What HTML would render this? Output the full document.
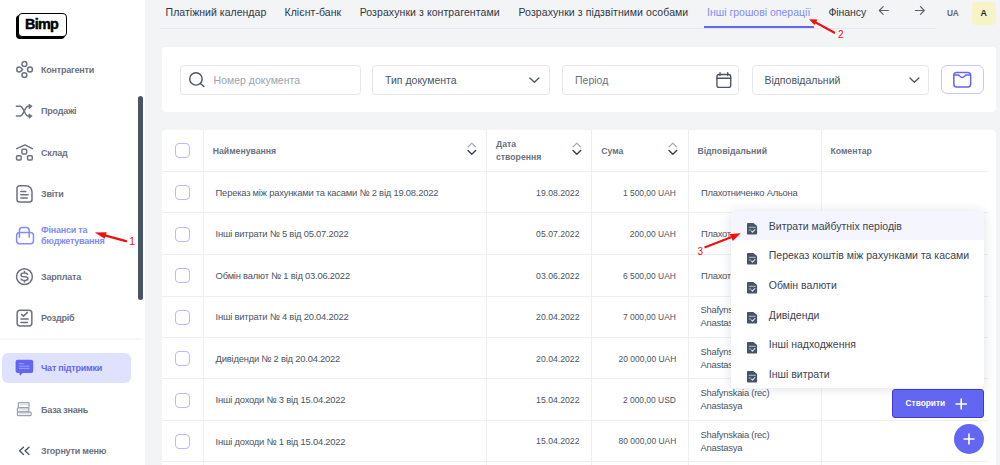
<!DOCTYPE html><html><head><meta charset="utf-8"><style>
html,body{margin:0;padding:0;width:1000px;height:465px;overflow:hidden;background:#f3f4f6;font-family:"Liberation Sans",sans-serif;}
.t{position:absolute;white-space:nowrap;line-height:1;}
svg{overflow:visible}
</style></head><body>
<div style="position:absolute;left:0px;top:0px;width:144.5px;height:465px;background:#fff;"></div>
<div style="position:absolute;left:16.3px;top:15.2px;width:48.5px;height:23.4px;background:#000;border-radius:4px;"></div>
<div style="position:absolute;left:17.6px;top:12.6px;width:49px;height:24px;box-sizing:border-box;border:1.6px solid #000;border-radius:4px;background:#fff;"></div>
<div class="t" style="left:25px;top:16.81px;font-size:14.4px;color:#000;font-weight:700;letter-spacing:-0.7px;-webkit-text-stroke:0.45px #000;">Bimp</div>
<svg style="position:absolute;left:15px;top:60px;" width="20" height="20" viewBox="0 0 20 20"><g fill="none" stroke="#6b7280" stroke-width="1.5"><circle cx="9.4" cy="4" r="2.45"/><path d="M7.6 9.5C6.5 8 5.5 7.05 4.2 7.05A2.45 2.45 0 0 0 4.2 11.95C5.5 11.95 6.5 11 7.6 9.5z"/><circle cx="15" cy="9.5" r="2.45"/><circle cx="9.4" cy="15.1" r="2.45"/></g></svg>
<div class="t" style="left:41px;top:65.88px;font-size:9px;color:#6b7280;font-weight:700;letter-spacing:-0.22px;">Контрагенти</div>
<svg style="position:absolute;left:15px;top:102px;" width="20" height="18" viewBox="0 0 20 18"><g fill="none" stroke="#6b7280" stroke-width="1.5" stroke-linecap="round"><path d="M1.4 4.3H5C8.8 4.3 9.6 14.1 13.2 14.1H14.6"/><path d="M1.4 14.1H5C8.8 14.1 9.6 4.3 13.2 4.3H14.6"/></g><path d="M14 2.1L17.2 4.3 14 6.5z M14 11.9L17.2 14.1 14 16.3z" fill="#6b7280" stroke="#6b7280" stroke-width="0.8" stroke-linejoin="round"/></svg>
<div class="t" style="left:41px;top:107.08px;font-size:9px;color:#6b7280;font-weight:700;letter-spacing:-0.22px;">Продажі</div>
<svg style="position:absolute;left:15px;top:142px;" width="20" height="20" viewBox="0 0 20 20"><g fill="none" stroke="#6b7280" stroke-width="1.5" stroke-linejoin="round" stroke-linecap="round"><path d="M1.7 6.6L10 2.9 17.3 6.6"/><rect x="6.95" y="7.25" width="4.7" height="4.7" rx="1"/><rect x="1.55" y="13.65" width="4.6" height="4.45" rx="1"/><rect x="12.55" y="13.65" width="4.7" height="4.45" rx="1"/></g></svg>
<div class="t" style="left:41px;top:148.88px;font-size:9px;color:#6b7280;font-weight:700;letter-spacing:-0.22px;">Склад</div>
<svg style="position:absolute;left:15px;top:184px;" width="20" height="20" viewBox="0 0 20 20"><g fill="none" stroke="#6b7280" stroke-width="1.5" stroke-linejoin="round" stroke-linecap="round"><path d="M2 4.2a2.5 2.5 0 0 1 2.5-2.5H11a6 6 0 0 1 6 6V15.4a2.5 2.5 0 0 1-2.5 2.5H4.5a2.5 2.5 0 0 1-2.5-2.5z"/><path d="M5.8 7.6H10.8M5.8 10.8H13M5.8 13.9H12.3"/></g></svg>
<div class="t" style="left:41px;top:189.78px;font-size:9px;color:#6b7280;font-weight:700;letter-spacing:-0.22px;">Звіти</div>
<svg style="position:absolute;left:15px;top:225px;" width="20" height="20" viewBox="0 0 20 20"><g fill="none" stroke="#818cf8" stroke-width="1.5" stroke-linejoin="round" stroke-linecap="round"><rect x="1.65" y="7.55" width="16.8" height="11.3" rx="3"/><path d="M4.45 12.3V5.4a3 3 0 0 1 3-3H11.15a3 3 0 0 1 3 3V12.3"/></g></svg>
<div class="t" style="left:41px;top:225.78px;font-size:9px;color:#818cf8;font-weight:700;letter-spacing:-0.22px;">Фінанси та</div>
<div class="t" style="left:41px;top:237.18px;font-size:9px;color:#818cf8;font-weight:700;letter-spacing:-0.22px;">бюджетування</div>
<svg style="position:absolute;left:15px;top:267px;" width="20" height="20" viewBox="0 0 20 20"><g fill="none" stroke="#6b7280" stroke-width="1.5" stroke-linecap="round"><circle cx="9.45" cy="9.7" r="7.9"/><path d="M12.6 7.3C12.3 6.5 11.3 6 10 6H8.7C7.1 6 6 6.8 6 8S7.1 9.7 8.7 9.7H10.3C11.9 9.7 12.9 10.3 12.9 11.5S11.8 13.4 10.2 13.4H8.6C7.3 13.4 6.3 12.9 6 12.1M9.45 4.4V6M9.45 13.4V15"/></g></svg>
<div class="t" style="left:41px;top:272.58px;font-size:9px;color:#6b7280;font-weight:700;letter-spacing:-0.22px;">Зарплата</div>
<svg style="position:absolute;left:15px;top:308px;" width="20" height="21" viewBox="0 0 20 21"><g fill="none" stroke="#6b7280" stroke-width="1.5" stroke-linecap="round" stroke-linejoin="round"><rect x="2.15" y="2.35" width="14.7" height="15.7" rx="3"/><path d="M6.6 6.4L8.5 8.1 12.4 4.4M5.9 11H13.2M5.9 14.4H12.4"/></g></svg>
<div class="t" style="left:41px;top:314.08px;font-size:9px;color:#6b7280;font-weight:700;letter-spacing:-0.22px;">Роздріб</div>
<div style="position:absolute;left:0px;top:336.5px;width:141px;height:3.5px;background:linear-gradient(#ffffff,#f3f4f6);"></div>
<div style="position:absolute;left:2px;top:353px;width:129px;height:30px;background:#e0e1fc;border-radius:6px;"></div>
<svg style="position:absolute;left:15px;top:359px;" width="20" height="19" viewBox="0 0 20 19"><rect x="0.6" y="0.7" width="17.6" height="13.2" rx="2" fill="#6366f1"/><path d="M4.1 13.5L5.1 16.7 8 13.5z" fill="#6366f1"/><path d="M4 4.7H8.8M4 7.2H14.4M4 9.4H14.4" stroke="#a4a8f8" stroke-width="0.9"/></svg>
<div class="t" style="left:41px;top:363.98px;font-size:9px;color:#6366f1;font-weight:700;letter-spacing:-0.22px;">Чат підтримки</div>
<svg style="position:absolute;left:15px;top:401px;" width="20" height="18" viewBox="0 0 20 18"><g fill="#fff" stroke="#9ca3af" stroke-width="1.3" stroke-linejoin="round"><rect x="3.4" y="1.6" width="10.6" height="5" rx="0.8"/><rect x="2.4" y="6.9" width="11.4" height="4" rx="0.8"/><rect x="2.4" y="11.1" width="13.7" height="3.5" rx="0.8"/></g><path d="M5 3.6h8M4 8.9h9M4 12.9h11" stroke="#d1d5db" stroke-width="1"/></svg>
<div class="t" style="left:41px;top:405.58px;font-size:9px;color:#6b7280;font-weight:700;letter-spacing:-0.22px;">База знань</div>
<svg style="position:absolute;left:18px;top:446px;" width="14" height="11" viewBox="0 0 14 11"><g fill="none" stroke="#4b5563" stroke-width="1.4" stroke-linecap="round" stroke-linejoin="round"><path d="M5.5 1.2L1.6 4.8 5.5 8.4M11 1.2L7.1 4.8 11 8.4"/></g></svg>
<div class="t" style="left:41px;top:446.88px;font-size:9px;color:#6b7280;font-weight:700;letter-spacing:-0.22px;">Згорнути меню</div>
<div style="position:absolute;left:138px;top:96px;width:5px;height:204px;background:#475569;border-radius:3px;"></div>
<svg style="position:absolute;left:90px;top:225px;" width="50" height="25" viewBox="0 0 50 25"><path d="M36 16.2L12 9.6" stroke="#f01010" stroke-width="2.3" stroke-linecap="round"/><path d="M5.6 7.7L16.3 7.6 14.5 13.4z" fill="#f01010" stroke="#f01010" stroke-width="0.5" stroke-linejoin="round"/></svg>
<div class="t" style="left:129.3px;top:235.71px;font-size:10.5px;color:#f01010;font-weight:400;font-family:"Liberation Serif",serif;">1</div>
<div class="t" style="left:165.6px;top:6.51px;font-size:10.5px;color:#303744;font-weight:400;letter-spacing:0.03px;">Платіжний календар</div>
<div class="t" style="left:284.5px;top:6.51px;font-size:10.5px;color:#303744;font-weight:400;letter-spacing:0.06px;">Клієнт-банк</div>
<div class="t" style="left:359.7px;top:6.51px;font-size:10.5px;color:#303744;font-weight:400;letter-spacing:0.08px;">Розрахунки з контрагентами</div>
<div class="t" style="left:518.5px;top:6.51px;font-size:10.5px;color:#303744;font-weight:400;letter-spacing:0.08px;">Розрахунки з підзвітними особами</div>
<div class="t" style="left:707px;top:6.51px;font-size:10.5px;color:#818cf8;font-weight:400;">Інші грошові операції</div>
<div class="t" style="left:828.4px;top:6.51px;font-size:10.5px;color:#303744;font-weight:400;letter-spacing:-0.08px;">Фінансу</div>
<div style="position:absolute;left:160px;top:28px;width:776px;height:1px;background:#e5e7eb;"></div>
<div style="position:absolute;left:704px;top:26px;width:110px;height:2px;background:#6366f1;"></div>
<svg style="position:absolute;left:878px;top:5px;" width="12" height="11" viewBox="0 0 12 11"><g fill="none" stroke="#59616e" stroke-width="1.1" stroke-linecap="round" stroke-linejoin="round"><path d="M10.3 5.5H1.3M5.2 1.6L1.3 5.5 5.2 9.4"/></g></svg>
<svg style="position:absolute;left:914px;top:5px;" width="12" height="11" viewBox="0 0 12 11"><g fill="none" stroke="#59616e" stroke-width="1.1" stroke-linecap="round" stroke-linejoin="round"><path d="M1.3 5.5H10.3M6.4 1.6L10.3 5.5 6.4 9.4"/></g></svg>
<div class="t" style="left:947px;top:9.47px;font-size:8.3px;color:#646b78;font-weight:700;letter-spacing:-0.2px;">UA</div>
<div style="position:absolute;left:972px;top:2px;width:24px;height:23px;background:#f6f4c6;border-radius:4px;"></div>
<div class="t" style="left:980.6px;top:8.85px;font-size:8.8px;color:#1f2937;font-weight:700;">A</div>
<svg style="position:absolute;left:805px;top:17px;" width="45" height="25" viewBox="0 0 45 25"><path d="M30 16L8 4" stroke="#ee1111" stroke-width="2"/><path d="M4 2.2l8.5.3-3 5.6z" fill="#ee1111"/></svg>
<div class="t" style="left:838px;top:30.14px;font-size:10px;color:#ee1111;font-weight:400;">2</div>
<div style="position:absolute;left:162px;top:47px;width:834px;height:65px;background:#fff;border-radius:4px;"></div>
<div style="position:absolute;left:180px;top:65px;width:180.5px;height:29.5px;box-sizing:border-box;border:1px solid #e5e7eb;border-radius:4px;background:#fff;"></div>
<svg style="position:absolute;left:187px;top:72px;" width="20" height="18" viewBox="0 0 20 18"><g fill="none" stroke="#4b5563" stroke-width="1.4" stroke-linecap="round"><circle cx="8.95" cy="6.95" r="6.2"/><path d="M13.4 11.4L16.8 14.5"/></g></svg>
<div class="t" style="left:213.6px;top:75.11px;font-size:10.5px;color:#9ca3af;font-weight:400;">Номер документа</div>
<div style="position:absolute;left:372px;top:65px;width:178px;height:29.5px;box-sizing:border-box;border:1px solid #e5e7eb;border-radius:4px;background:#fff;"></div>
<div class="t" style="left:385px;top:75.11px;font-size:10.5px;color:#4b5563;font-weight:400;">Тип документа</div>
<svg style="position:absolute;left:529.3px;top:77.3px;" width="11" height="7" viewBox="0 0 11 7"><path d="M.9 .9l4.5 4.4L9.9 .9" fill="none" stroke="#505865" stroke-width="1.35" stroke-linecap="round" stroke-linejoin="round"/></svg>
<div style="position:absolute;left:562px;top:65px;width:177.3px;height:29.5px;box-sizing:border-box;border:1px solid #e5e7eb;border-radius:4px;background:#fff;"></div>
<div class="t" style="left:575px;top:75.11px;font-size:10.5px;color:#6b7280;font-weight:400;">Період</div>
<svg style="position:absolute;left:715px;top:71px;" width="18" height="18" viewBox="0 0 18 18"><g fill="none" stroke="#4b5563" stroke-width="1.35" stroke-linecap="round"><rect x="1.95" y="3.45" width="13.8" height="12.9" rx="2.2"/><path d="M1.95 7.2H15.75M5 1.6V4.6M12.7 1.6V4.6"/></g></svg>
<div style="position:absolute;left:751.6px;top:65px;width:177px;height:29.5px;box-sizing:border-box;border:1px solid #e5e7eb;border-radius:4px;background:#fff;"></div>
<div class="t" style="left:764.4px;top:75.11px;font-size:10.5px;color:#4b5563;font-weight:400;">Відповідальний</div>
<svg style="position:absolute;left:908.6px;top:77.3px;" width="11" height="7" viewBox="0 0 11 7"><path d="M.9 .9l4.5 4.4L9.9 .9" fill="none" stroke="#505865" stroke-width="1.35" stroke-linecap="round" stroke-linejoin="round"/></svg>
<div style="position:absolute;left:941px;top:65px;width:43px;height:29px;box-sizing:border-box;border:1px solid #c7c8fb;border-radius:6px;background:#fff;"></div>
<svg style="position:absolute;left:952px;top:70px;" width="20" height="19" viewBox="0 0 20 19"><g fill="none" stroke="#6366f1" stroke-width="1.5" stroke-linejoin="round"><rect x="1.85" y="2.45" width="16.8" height="14.6" rx="2.8"/><path d="M1.85 5.1H6.2C7.5 5.1 8.1 7.5 10.25 7.5S13 5.1 14.3 5.1H18.65"/></g></svg>
<div style="position:absolute;left:162px;top:130px;width:834px;height:340px;background:#fff;border-radius:4px;"></div>
<div style="position:absolute;left:162px;top:171px;width:826px;height:1px;background:#eeeff2;"></div>
<div style="position:absolute;left:162px;top:212px;width:826px;height:1px;background:#eeeff2;"></div>
<div style="position:absolute;left:162px;top:254px;width:826px;height:1px;background:#eeeff2;"></div>
<div style="position:absolute;left:162px;top:296px;width:826px;height:1px;background:#eeeff2;"></div>
<div style="position:absolute;left:162px;top:337px;width:826px;height:1px;background:#eeeff2;"></div>
<div style="position:absolute;left:162px;top:378px;width:826px;height:1px;background:#eeeff2;"></div>
<div style="position:absolute;left:162px;top:420px;width:826px;height:1px;background:#eeeff2;"></div>
<div style="position:absolute;left:162px;top:461px;width:826px;height:1px;background:#eeeff2;"></div>
<div style="position:absolute;left:203px;top:130px;width:1px;height:335px;background:#eeeff2;"></div>
<div style="position:absolute;left:486px;top:130px;width:1px;height:335px;background:#eeeff2;"></div>
<div style="position:absolute;left:591px;top:130px;width:1px;height:335px;background:#eeeff2;"></div>
<div style="position:absolute;left:688px;top:130px;width:1px;height:335px;background:#eeeff2;"></div>
<div style="position:absolute;left:821px;top:130px;width:1px;height:335px;background:#eeeff2;"></div>
<div style="position:absolute;left:175px;top:143px;width:15px;height:15px;box-sizing:border-box;border:1.5px solid #c4b5fd;border-radius:4px;background:#fff;"></div>
<div class="t" style="left:212.7px;top:146.84px;font-size:8.7px;color:#6b7280;font-weight:700;">Найменування</div>
<div class="t" style="left:496px;top:140.44px;font-size:8.7px;color:#6b7280;font-weight:700;">Дата</div>
<div class="t" style="left:496px;top:153.24px;font-size:8.7px;color:#6b7280;font-weight:700;">створення</div>
<div class="t" style="left:601.2px;top:146.84px;font-size:8.7px;color:#6b7280;font-weight:700;">Сума</div>
<div class="t" style="left:697.4px;top:146.84px;font-size:8.7px;color:#6b7280;font-weight:700;">Відповідальний</div>
<div class="t" style="left:830.4px;top:146.84px;font-size:8.7px;color:#6b7280;font-weight:700;">Коментар</div>
<svg style="position:absolute;left:467px;top:142px;" width="10" height="14" viewBox="0 0 10 14"><g fill="none" stroke-linecap="round" stroke-linejoin="round"><path d="M1 5l3.8-3.8L8.6 5" stroke="#a3a8b1" stroke-width="1.15"/><path d="M1 8.5l3.8 3.8 3.8-3.8" stroke="#3a4250" stroke-width="1.4"/></g></svg>
<svg style="position:absolute;left:572px;top:142px;" width="10" height="14" viewBox="0 0 10 14"><g fill="none" stroke-linecap="round" stroke-linejoin="round"><path d="M1 5l3.8-3.8L8.6 5" stroke="#a3a8b1" stroke-width="1.15"/><path d="M1 8.5l3.8 3.8 3.8-3.8" stroke="#3a4250" stroke-width="1.4"/></g></svg>
<svg style="position:absolute;left:668px;top:142px;" width="10" height="14" viewBox="0 0 10 14"><g fill="none" stroke-linecap="round" stroke-linejoin="round"><path d="M1 5l3.8-3.8L8.6 5" stroke="#a3a8b1" stroke-width="1.15"/><path d="M1 8.5l3.8 3.8 3.8-3.8" stroke="#3a4250" stroke-width="1.4"/></g></svg>
<div style="position:absolute;left:175px;top:185px;width:15px;height:15px;box-sizing:border-box;border:1.5px solid #c4b5fd;border-radius:4px;background:#fff;"></div>
<div class="t" style="left:215.6px;top:187.89px;font-size:9.4px;color:#4b5563;font-weight:400;letter-spacing:-0.21px;">Переказ між рахунками та касами № 2 від 19.08.2022</div>
<div class="t" style="right:420.1px;top:187.74px;font-size:9.7px;color:#4b5563;font-weight:400;text-align:right;transform:scaleX(0.895);transform-origin:100% 50%;">19.08.2022</div>
<div class="t" style="right:323.9px;top:187.74px;font-size:9.7px;color:#4b5563;font-weight:400;text-align:right;transform:scaleX(0.87);transform-origin:100% 50%;">1 500,00 UAH</div>
<div class="t" style="left:701px;top:187.89px;font-size:9.4px;color:#4b5563;font-weight:400;letter-spacing:-0.24px;">Плахотниченко Альона</div>
<div style="position:absolute;left:175px;top:227px;width:15px;height:15px;box-sizing:border-box;border:1.5px solid #c4b5fd;border-radius:4px;background:#fff;"></div>
<div class="t" style="left:215.6px;top:229.39px;font-size:9.4px;color:#4b5563;font-weight:400;letter-spacing:-0.21px;">Інші витрати № 5 від 05.07.2022</div>
<div class="t" style="right:420.1px;top:229.24px;font-size:9.7px;color:#4b5563;font-weight:400;text-align:right;transform:scaleX(0.895);transform-origin:100% 50%;">05.07.2022</div>
<div class="t" style="right:323.9px;top:229.24px;font-size:9.7px;color:#4b5563;font-weight:400;text-align:right;transform:scaleX(0.87);transform-origin:100% 50%;">200,00 UAH</div>
<div class="t" style="left:701px;top:229.39px;font-size:9.4px;color:#4b5563;font-weight:400;letter-spacing:-0.24px;">Плахотниченко Альона</div>
<div style="position:absolute;left:175px;top:268px;width:15px;height:15px;box-sizing:border-box;border:1.5px solid #c4b5fd;border-radius:4px;background:#fff;"></div>
<div class="t" style="left:215.6px;top:270.89px;font-size:9.4px;color:#4b5563;font-weight:400;letter-spacing:-0.21px;">Обмін валют № 1 від 03.06.2022</div>
<div class="t" style="right:420.1px;top:270.74px;font-size:9.7px;color:#4b5563;font-weight:400;text-align:right;transform:scaleX(0.895);transform-origin:100% 50%;">03.06.2022</div>
<div class="t" style="right:323.9px;top:270.74px;font-size:9.7px;color:#4b5563;font-weight:400;text-align:right;transform:scaleX(0.87);transform-origin:100% 50%;">6 500,00 UAH</div>
<div class="t" style="left:701px;top:270.89px;font-size:9.4px;color:#4b5563;font-weight:400;letter-spacing:-0.24px;">Плахотниченко Альона</div>
<div style="position:absolute;left:175px;top:310px;width:15px;height:15px;box-sizing:border-box;border:1.5px solid #c4b5fd;border-radius:4px;background:#fff;"></div>
<div class="t" style="left:215.6px;top:312.39px;font-size:9.4px;color:#4b5563;font-weight:400;letter-spacing:-0.21px;">Інші витрати № 4 від 20.04.2022</div>
<div class="t" style="right:420.1px;top:312.24px;font-size:9.7px;color:#4b5563;font-weight:400;text-align:right;transform:scaleX(0.895);transform-origin:100% 50%;">20.04.2022</div>
<div class="t" style="right:323.9px;top:312.24px;font-size:9.7px;color:#4b5563;font-weight:400;text-align:right;transform:scaleX(0.87);transform-origin:100% 50%;">7 000,00 UAH</div>
<div class="t" style="left:700.5px;top:305.39px;font-size:9.4px;color:#4b5563;font-weight:400;letter-spacing:-0.24px;">Shafynskaia (rec)</div>
<div class="t" style="left:700.5px;top:318.29px;font-size:9.4px;color:#4b5563;font-weight:400;letter-spacing:-0.24px;">Anastasya</div>
<div style="position:absolute;left:175px;top:351px;width:15px;height:15px;box-sizing:border-box;border:1.5px solid #c4b5fd;border-radius:4px;background:#fff;"></div>
<div class="t" style="left:215.6px;top:353.89px;font-size:9.4px;color:#4b5563;font-weight:400;letter-spacing:-0.21px;">Дивіденди № 2 від 20.04.2022</div>
<div class="t" style="right:420.1px;top:353.74px;font-size:9.7px;color:#4b5563;font-weight:400;text-align:right;transform:scaleX(0.895);transform-origin:100% 50%;">20.04.2022</div>
<div class="t" style="right:323.9px;top:353.74px;font-size:9.7px;color:#4b5563;font-weight:400;text-align:right;transform:scaleX(0.87);transform-origin:100% 50%;">20 000,00 UAH</div>
<div class="t" style="left:700.5px;top:346.89px;font-size:9.4px;color:#4b5563;font-weight:400;letter-spacing:-0.24px;">Shafynskaia (rec)</div>
<div class="t" style="left:700.5px;top:359.79px;font-size:9.4px;color:#4b5563;font-weight:400;letter-spacing:-0.24px;">Anastasya</div>
<div style="position:absolute;left:175px;top:393px;width:15px;height:15px;box-sizing:border-box;border:1.5px solid #c4b5fd;border-radius:4px;background:#fff;"></div>
<div class="t" style="left:215.6px;top:395.39px;font-size:9.4px;color:#4b5563;font-weight:400;letter-spacing:-0.21px;">Інші доходи № 3 від 15.04.2022</div>
<div class="t" style="right:420.1px;top:395.24px;font-size:9.7px;color:#4b5563;font-weight:400;text-align:right;transform:scaleX(0.895);transform-origin:100% 50%;">15.04.2022</div>
<div class="t" style="right:323.9px;top:395.24px;font-size:9.7px;color:#4b5563;font-weight:400;text-align:right;transform:scaleX(0.87);transform-origin:100% 50%;">2 000,00 USD</div>
<div class="t" style="left:700.5px;top:388.39px;font-size:9.4px;color:#4b5563;font-weight:400;letter-spacing:-0.24px;">Shafynskaia (rec)</div>
<div class="t" style="left:700.5px;top:401.29px;font-size:9.4px;color:#4b5563;font-weight:400;letter-spacing:-0.24px;">Anastasya</div>
<div style="position:absolute;left:175px;top:434px;width:15px;height:15px;box-sizing:border-box;border:1.5px solid #c4b5fd;border-radius:4px;background:#fff;"></div>
<div class="t" style="left:215.6px;top:436.64px;font-size:9.4px;color:#4b5563;font-weight:400;letter-spacing:-0.21px;">Інші доходи № 1 від 15.04.2022</div>
<div class="t" style="right:420.1px;top:436.49px;font-size:9.7px;color:#4b5563;font-weight:400;text-align:right;transform:scaleX(0.895);transform-origin:100% 50%;">15.04.2022</div>
<div class="t" style="right:323.9px;top:436.49px;font-size:9.7px;color:#4b5563;font-weight:400;text-align:right;transform:scaleX(0.87);transform-origin:100% 50%;">80 000,00 UAH</div>
<div class="t" style="left:700.5px;top:429.64px;font-size:9.4px;color:#4b5563;font-weight:400;letter-spacing:-0.24px;">Shafynskaia (rec)</div>
<div class="t" style="left:700.5px;top:442.54px;font-size:9.4px;color:#4b5563;font-weight:400;letter-spacing:-0.24px;">Anastasya</div>
<div style="position:absolute;left:731px;top:210.5px;width:253px;height:177px;background:#fff;border-radius:4px;box-shadow:0 1px 12px rgba(30,41,80,0.14);"></div>
<div style="position:absolute;left:731px;top:210.5px;width:253px;height:29.6px;background:#f5f6fd;border-radius:4px 4px 0 0;"></div>
<svg style="position:absolute;left:746.9px;top:222.8px;" width="11" height="12" viewBox="0 0 11 12"><path d="M0 .8A.8 .8 0 0 1 .8 0H6.4L10.1 3.1V10.8A.8 .8 0 0 1 9.3 11.6H.8A.8 .8 0 0 1 0 10.8z" fill="#465467"/><path d="M1.8 4.3H8.7M1.8 7H3.9" stroke="#b4bcc8" stroke-width="1"/><path d="M4.6 8.1L5.5 9.1 7.9 6.5" fill="none" stroke="#e8ebef" stroke-width="1.1" stroke-linecap="round" stroke-linejoin="round"/></svg>
<div class="t" style="left:768.8px;top:220.51px;font-size:10.5px;color:#3d4452;font-weight:400;">Витрати майбутніх періодів</div>
<svg style="position:absolute;left:746.9px;top:252.50000000000003px;" width="11" height="12" viewBox="0 0 11 12"><path d="M0 .8A.8 .8 0 0 1 .8 0H6.4L10.1 3.1V10.8A.8 .8 0 0 1 9.3 11.6H.8A.8 .8 0 0 1 0 10.8z" fill="#465467"/><path d="M1.8 4.3H8.7M1.8 7H3.9" stroke="#b4bcc8" stroke-width="1"/><path d="M4.6 8.1L5.5 9.1 7.9 6.5" fill="none" stroke="#e8ebef" stroke-width="1.1" stroke-linecap="round" stroke-linejoin="round"/></svg>
<div class="t" style="left:768.8px;top:250.21px;font-size:10.5px;color:#3d4452;font-weight:400;">Переказ коштів між рахунками та касами</div>
<svg style="position:absolute;left:746.9px;top:282.2px;" width="11" height="12" viewBox="0 0 11 12"><path d="M0 .8A.8 .8 0 0 1 .8 0H6.4L10.1 3.1V10.8A.8 .8 0 0 1 9.3 11.6H.8A.8 .8 0 0 1 0 10.8z" fill="#465467"/><path d="M1.8 4.3H8.7M1.8 7H3.9" stroke="#b4bcc8" stroke-width="1"/><path d="M4.6 8.1L5.5 9.1 7.9 6.5" fill="none" stroke="#e8ebef" stroke-width="1.1" stroke-linecap="round" stroke-linejoin="round"/></svg>
<div class="t" style="left:768.8px;top:279.91px;font-size:10.5px;color:#3d4452;font-weight:400;">Обмін валюти</div>
<svg style="position:absolute;left:746.9px;top:311.9px;" width="11" height="12" viewBox="0 0 11 12"><path d="M0 .8A.8 .8 0 0 1 .8 0H6.4L10.1 3.1V10.8A.8 .8 0 0 1 9.3 11.6H.8A.8 .8 0 0 1 0 10.8z" fill="#465467"/><path d="M1.8 4.3H8.7M1.8 7H3.9" stroke="#b4bcc8" stroke-width="1"/><path d="M4.6 8.1L5.5 9.1 7.9 6.5" fill="none" stroke="#e8ebef" stroke-width="1.1" stroke-linecap="round" stroke-linejoin="round"/></svg>
<div class="t" style="left:768.8px;top:309.61px;font-size:10.5px;color:#3d4452;font-weight:400;">Дивіденди</div>
<svg style="position:absolute;left:746.9px;top:341.59999999999997px;" width="11" height="12" viewBox="0 0 11 12"><path d="M0 .8A.8 .8 0 0 1 .8 0H6.4L10.1 3.1V10.8A.8 .8 0 0 1 9.3 11.6H.8A.8 .8 0 0 1 0 10.8z" fill="#465467"/><path d="M1.8 4.3H8.7M1.8 7H3.9" stroke="#b4bcc8" stroke-width="1"/><path d="M4.6 8.1L5.5 9.1 7.9 6.5" fill="none" stroke="#e8ebef" stroke-width="1.1" stroke-linecap="round" stroke-linejoin="round"/></svg>
<div class="t" style="left:768.8px;top:339.31px;font-size:10.5px;color:#3d4452;font-weight:400;">Інші надходження</div>
<svg style="position:absolute;left:746.9px;top:371.29999999999995px;" width="11" height="12" viewBox="0 0 11 12"><path d="M0 .8A.8 .8 0 0 1 .8 0H6.4L10.1 3.1V10.8A.8 .8 0 0 1 9.3 11.6H.8A.8 .8 0 0 1 0 10.8z" fill="#465467"/><path d="M1.8 4.3H8.7M1.8 7H3.9" stroke="#b4bcc8" stroke-width="1"/><path d="M4.6 8.1L5.5 9.1 7.9 6.5" fill="none" stroke="#e8ebef" stroke-width="1.1" stroke-linecap="round" stroke-linejoin="round"/></svg>
<div class="t" style="left:768.8px;top:369.01px;font-size:10.5px;color:#3d4452;font-weight:400;">Інші витрати</div>
<svg style="position:absolute;left:700px;top:228px;" width="45" height="25" viewBox="0 0 45 25"><path d="M4.5 19.5L33 8.5" stroke="#ee1111" stroke-width="2.2"/><path d="M40.7 5.3l-11 .6 3.2 7.2z" fill="#ee1111"/></svg>
<div class="t" style="left:697.5px;top:246.53px;font-size:10px;color:#ee1111;font-weight:400;">3</div>
<div style="position:absolute;left:892px;top:389px;width:92px;height:29px;box-sizing:border-box;background:#6366f1;border:1px solid #4338ca;border-radius:3px;"></div>
<div class="t" style="left:905.6px;top:399.47px;font-size:8.3px;color:#ffffff;font-weight:700;">Створити</div>
<svg style="position:absolute;left:955px;top:398px;" width="13" height="12" viewBox="0 0 13 12"><path d="M6.2 0.5v11M0.5 6h11.5" stroke="#fff" stroke-width="1.6"/></svg>
<div style="position:absolute;left:954px;top:424px;width:30px;height:30px;border-radius:50%;background:#6366f1;"></div>
<svg style="position:absolute;left:963px;top:433px;" width="12" height="12" viewBox="0 0 12 12"><path d="M6 0.5v11M0.5 6h11" stroke="#fff" stroke-width="1.6"/></svg>
</body></html>
